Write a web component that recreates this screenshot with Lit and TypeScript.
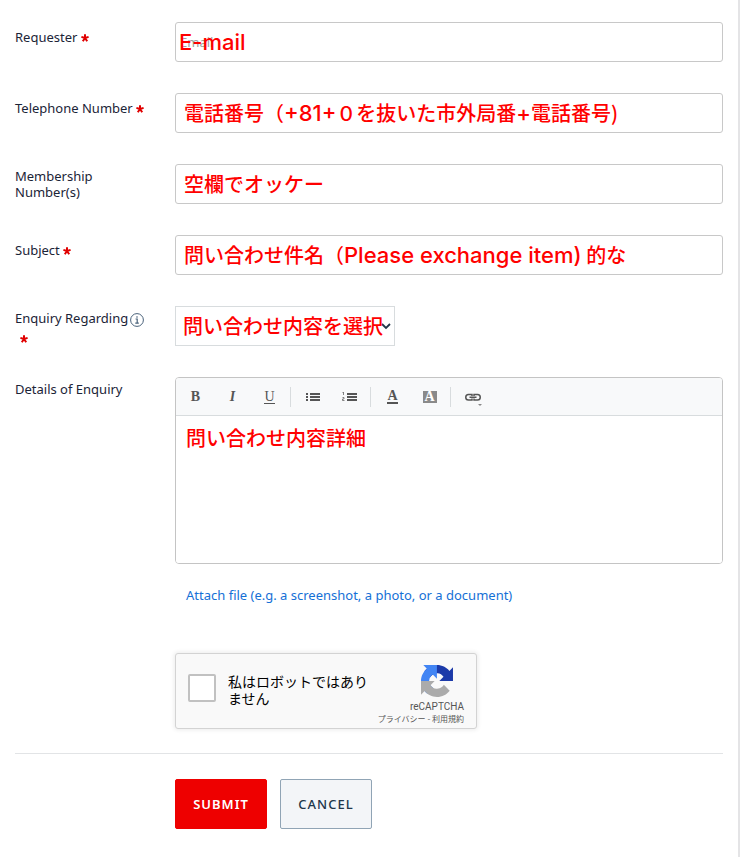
import { LitElement, html, css, svg, nothing } from "lit";
import { customElement } from "lit/decorators.js";

interface TextField {
  id: string;
  label: string;
  type: string;
  required: boolean;
  placeholder: string;
  note: unknown;
}

const FIELDS: TextField[] = [
  {
    id: "requester",
    label: "Requester",
    type: "email",
    required: true,
    placeholder: "Email",
    note: html`<span class="note near"><span class="latin">E-mail</span></span>`,
  },
  {
    id: "telephone",
    label: "Telephone Number",
    type: "tel",
    required: true,
    placeholder: "",
    note: html`<span class="note">電話番号（<span class="latin">+81+</span>０を抜いた市外局番<span class="latin">+</span>電話番号)</span>`,
  },
  {
    id: "membership",
    label: "Membership Number(s)",
    type: "text",
    required: false,
    placeholder: "",
    note: html`<span class="note">空欄でオッケー</span>`,
  },
  {
    id: "subject",
    label: "Subject",
    type: "text",
    required: true,
    placeholder: "",
    note: html`<span class="note">問い合わせ件名（<span class="latin">Please exchange item)</span> 的な</span>`,
  },
];

const bulletList = svg`
  <path d="M0 1h2v2H0zM0 4h2v2H0zM0 7h2v2H0z M4 1h10v2H4zM4 4h10v2H4zM4 7h10v2H4z" fill="#555"/>`;

const numberList = svg`
  <path d="M1.5 0v3M0.5 0.5h1M0.5 5.5h1.5v1.5h-1.5v1.5h2" fill="none" stroke="#666" stroke-width="0.8"/>
  <path d="M5 1h10v2H5zM5 4h10v2H5zM5 7h10v2H5z" fill="#555"/>`;

@customElement("app-root")
export class AppRoot extends LitElement {
  static styles = css`
    :host {
      display: block;
      box-sizing: border-box;
      min-height: 100vh;
      padding: 22px 15px 28px;
      background: #fff;
      border-right: 2px solid #e4e4e6;
      color: #1b2437;
      font: 13px/16px "Noto Sans", sans-serif;
    }
    * {
      box-sizing: border-box;
    }
    form {
      display: flex;
      flex-direction: column;
    }
    .rows {
      display: grid;
      grid-template-columns: 140px minmax(0, 1fr);
      column-gap: 20px;
      row-gap: 31px;
    }
    .label {
      padding-top: 4px;
    }
    .label.required {
      line-height: 22px;
      white-space: nowrap;
    }
    .star.below {
      display: block;
      padding: 8px 0 0 5px;
      line-height: 8px;
      height: 16px;
    }
    .star.below svg {
      display: block;
    }
    .info {
      vertical-align: text-bottom;
      margin-left: 2px;
    }
    .field {
      position: relative;
      height: 40px;
    }
    .field input {
      display: block;
      width: 100%;
      height: 40px;
      padding: 0 4px;
      border: 1px solid #c8c8c8;
      border-radius: 3px;
      background: #fff;
      font: 13px/16px "Noto Sans", sans-serif;
    }
    .field input::placeholder {
      color: #a0a0a0;
      opacity: 1;
    }
    .note {
      position: absolute;
      left: 9px;
      top: 5px;
      color: #f00;
      font: 500 20px/30px "Noto Sans CJK JP", sans-serif;
      white-space: nowrap;
      pointer-events: none;
    }
    .note.near {
      left: 4px;
    }
    .latin {
      font: 500 22px/30px Inter, sans-serif;
    }
    .field.choice {
      width: 220px;
    }
    select {
      appearance: none;
      display: block;
      width: 100%;
      height: 40px;
      padding: 0 12px;
      border: 1px solid #d8dcde;
      border-radius: 0;
      background: #fff;
      color: #2f3941;
      font: 13px/16px "Noto Sans", sans-serif;
    }
    .chevron {
      position: absolute;
      right: 4px;
      top: 17px;
      pointer-events: none;
    }
    .choice .note {
      left: 8px;
    }
    .editor {
      border: 1px solid #c4c4c4;
      border-radius: 4px;
      overflow: hidden;
    }
    .toolbar {
      display: flex;
      align-items: center;
      height: 38px;
      padding-left: 1px;
      background: #f8f9fa;
      border-bottom: 1px solid #d8dcde;
    }
    .tool {
      width: 37px;
      height: 36px;
      padding: 0;
      border: 0;
      background: none;
      color: #555;
      font: bold 14px/16px "Liberation Serif", serif;
      display: flex;
      align-items: center;
      justify-content: center;
    }
    .italic {
      font-style: italic;
    }
    .regular {
      font-weight: normal;
    }
    .line {
      border-bottom: 1px solid #555;
      line-height: 13px;
    }
    .line.thick {
      border-bottom-width: 2px;
      line-height: 12px;
    }
    .fill {
      background: #8a8a8a;
      color: #fff;
      width: 14px;
      line-height: 12px;
    }
    .sep {
      width: 1px;
      height: 20px;
      margin: 0 3px 0 2px;
      background: #d8dcde;
    }
    .body {
      position: relative;
    }
    textarea {
      display: block;
      width: 100%;
      height: 147px;
      padding: 10px;
      border: 0;
      resize: none;
      font: 13px/16px "Noto Sans", sans-serif;
    }
    .body .note {
      left: 10px;
      top: 7px;
    }
    .after {
      padding-left: 160px;
    }
    .attach {
      display: inline-block;
      margin: 23px 11px 50px;
      color: #1570d6;
      text-decoration: none;
    }
    .captcha {
      display: flex;
      align-items: center;
      width: 302px;
      height: 76px;
      padding: 0 12px;
      border: 1px solid #d3d3d3;
      border-radius: 3px;
      background: #f9f9f9;
      box-shadow: 0 0 4px 1px rgba(0, 0, 0, 0.08);
      color: #000;
    }
    .captcha input {
      appearance: none;
      flex: none;
      width: 28px;
      height: 28px;
      margin: 0 12px 6px 0;
      border: 2px solid #c1c1c1;
      border-radius: 2px;
      background: #fff;
    }
    .captcha label {
      width: 144px;
      margin-bottom: 2px;
      font: 14px/17px "Noto Sans CJK JP", sans-serif;
    }
    .brand {
      display: flex;
      flex-direction: column;
      align-items: flex-end;
      flex: 1;
      padding-top: 8px;
      color: #555;
      white-space: nowrap;
    }
    .brand svg {
      margin-right: 11px;
    }
    .brand .name {
      font: 10px/12px Roboto, sans-serif;
      margin-top: 4px;
    }
    .brand .terms {
      font: 8px/12px "Noto Sans CJK JP", sans-serif;
    }
    .terms a {
      color: #555;
      text-decoration: none;
    }
    hr {
      width: 100%;
      margin: 24px 0 25px;
      border: 0;
      border-top: 1px solid #e2e4e6;
    }
    .actions {
      display: flex;
      gap: 13px;
    }
    .btn {
      width: 92px;
      height: 50px;
      padding: 0;
      border: 1px solid #90a4b5;
      border-radius: 2px;
      background: #f3f5f8;
      color: #21364b;
      font: 500 13px/16px "Noto Sans", sans-serif;
      letter-spacing: 1px;
    }
    .btn.primary {
      border-color: #e00;
      background: #e00;
      color: #fff;
      font-weight: 600;
    }
  `;

  private star(below = false) {
    return html`<span class="star ${below ? "below" : ""}"
      ><svg width="8" height="8" viewBox="0 0 8 8" role="img" aria-label="required">
        <path d="M4 4V0.3M4 4L7.6 2.9M4 4L6.2 7.2M4 4L1.8 7.2M4 4L0.4 2.9" stroke="#e00000" stroke-width="2" />
      </svg></span>`;
  }

  private textRow(f: TextField) {
    return html`
      <label class="label ${f.required ? "required" : ""}" for=${f.id}
        >${f.label} ${f.required ? this.star() : nothing}</label
      >
      <div class="field">
        <input id=${f.id} type=${f.type} placeholder=${f.placeholder} ?required=${f.required} />
        ${f.note}
      </div>
    `;
  }

  render() {
    return html`
      <form>
        <div class="rows">
          ${FIELDS.map((f) => this.textRow(f))}
          <label class="label" for="regarding"
            >Enquiry Regarding<svg class="info" width="14" height="14" viewBox="0 0 14 14">
              <circle cx="7" cy="7" r="6.4" fill="none" stroke="#49617a" />
              <path d="M7 3.2v1.5M5.6 6h1.6v4M5.3 10.2h3.5" fill="none" stroke="#49617a" stroke-width="1.2" /></svg
            >${this.star(true)}</label
          >
          <div class="field choice">
            <select id="regarding">
              <option>-</option>
            </select>
            <svg class="chevron" width="10" height="7" viewBox="0 0 10 7">
              <path d="M1 1l4 4 4-4" fill="none" stroke="#20364a" stroke-width="1.8" />
            </svg>
            <span class="note">問い合わせ内容を選択</span>
          </div>
          <label class="label" for="details">Details of Enquiry</label>
          <div class="editor">
            <div class="toolbar">
              <button class="tool" type="button" aria-label="Bold">B</button>
              <button class="tool italic" type="button" aria-label="Italic">I</button>
              <button class="tool regular" type="button" aria-label="Underline"><span class="line">U</span></button>
              <span class="sep"></span>
              <button class="tool" type="button" aria-label="Bulleted list">
                <svg width="14" height="10" viewBox="0 0 14 10">${bulletList}</svg>
              </button>
              <button class="tool" type="button" aria-label="Numbered list">
                <svg width="15" height="10" viewBox="0 0 15 10">${numberList}</svg>
              </button>
              <span class="sep"></span>
              <button class="tool" type="button" aria-label="Text colour"><span class="line thick">A</span></button>
              <button class="tool" type="button" aria-label="Background colour"><span class="fill">A</span></button>
              <span class="sep"></span>
              <button class="tool" type="button" aria-label="Link">
                <svg width="18" height="18" viewBox="0 0 18 18">
                  <path
                    d="M8 8V6.5H4.5a2.5 2.5 0 0 0 0 5.5H8V10.500M10 8V6.5h3.500a2.5 2.5 0 0 1 0 5.5H10V10.500M5.500 9.200h7"
                    fill="none"
                    stroke="#555"
                    stroke-width="1.5"
                  />
                  <path d="M14 16h4l-2 2z" fill="#888" />
                </svg>
              </button>
            </div>
            <div class="body">
              <textarea id="details"></textarea>
              <span class="note">問い合わせ内容詳細</span>
            </div>
          </div>
        </div>
        <div class="after">
          <a class="attach" href="#">Attach file (e.g. a screenshot, a photo, or a document)</a>
          <div class="captcha">
            <input id="robot" type="checkbox" />
            <label for="robot">私はロボットではありません</label>
            <div class="brand">
              <svg width="32" height="32" viewBox="0 0 64 64">
                <path
                  d="M64 31.955l-.033-1.37V4.687l-7.16 7.16C50.948 4.674 42.033.093 32.05.093c-10.4 0-19.622 4.96-25.458 12.64l11.736 11.86a15.55 15.55 0 0 1 4.754-5.334c2.05-1.6 4.952-2.906 8.968-2.906.485 0 .86.057 1.135.163 4.976.393 9.288 3.14 11.828 7.124l-8.307 8.307L64 31.953"
                  fill="#1c3aa9"
                />
                <path
                  d="M31.862.094l-1.37.033H4.594l7.16 7.16C4.58 13.147 0 22.06 0 32.046c0 10.4 4.96 19.622 12.64 25.458L24.5 45.768a15.55 15.55 0 0 1-5.334-4.754c-1.6-2.05-2.906-4.952-2.906-8.968 0-.485.057-.86.163-1.135.393-4.976 3.14-9.288 7.124-11.828l8.307 8.307L31.86.095"
                  fill="#4285f4"
                />
                <path
                  d="M.001 32.045l.033 1.37v25.898l7.16-7.16c5.86 7.173 14.774 11.754 24.76 11.754 10.4 0 19.622-4.96 25.458-12.64l-11.736-11.86a15.55 15.55 0 0 1-4.754 5.334c-2.05 1.6-4.952 2.906-8.968 2.906-.485 0-.86-.057-1.135-.163-4.976-.393-9.288-3.14-11.828-7.124l8.307-8.307c-10.522.04-22.4.066-27.295-.005"
                  fill="#ababab"
                />
              </svg>
              <span class="name">reCAPTCHA</span>
              <span class="terms"><a href="#">プライバシー</a> - <a href="#">利用規約</a></span>
            </div>
          </div>
        </div>
        <hr />
        <div class="after actions">
          <button class="btn primary" type="submit">SUBMIT</button>
          <button class="btn" type="button">CANCEL</button>
        </div>
      </form>
    `;
  }
}
